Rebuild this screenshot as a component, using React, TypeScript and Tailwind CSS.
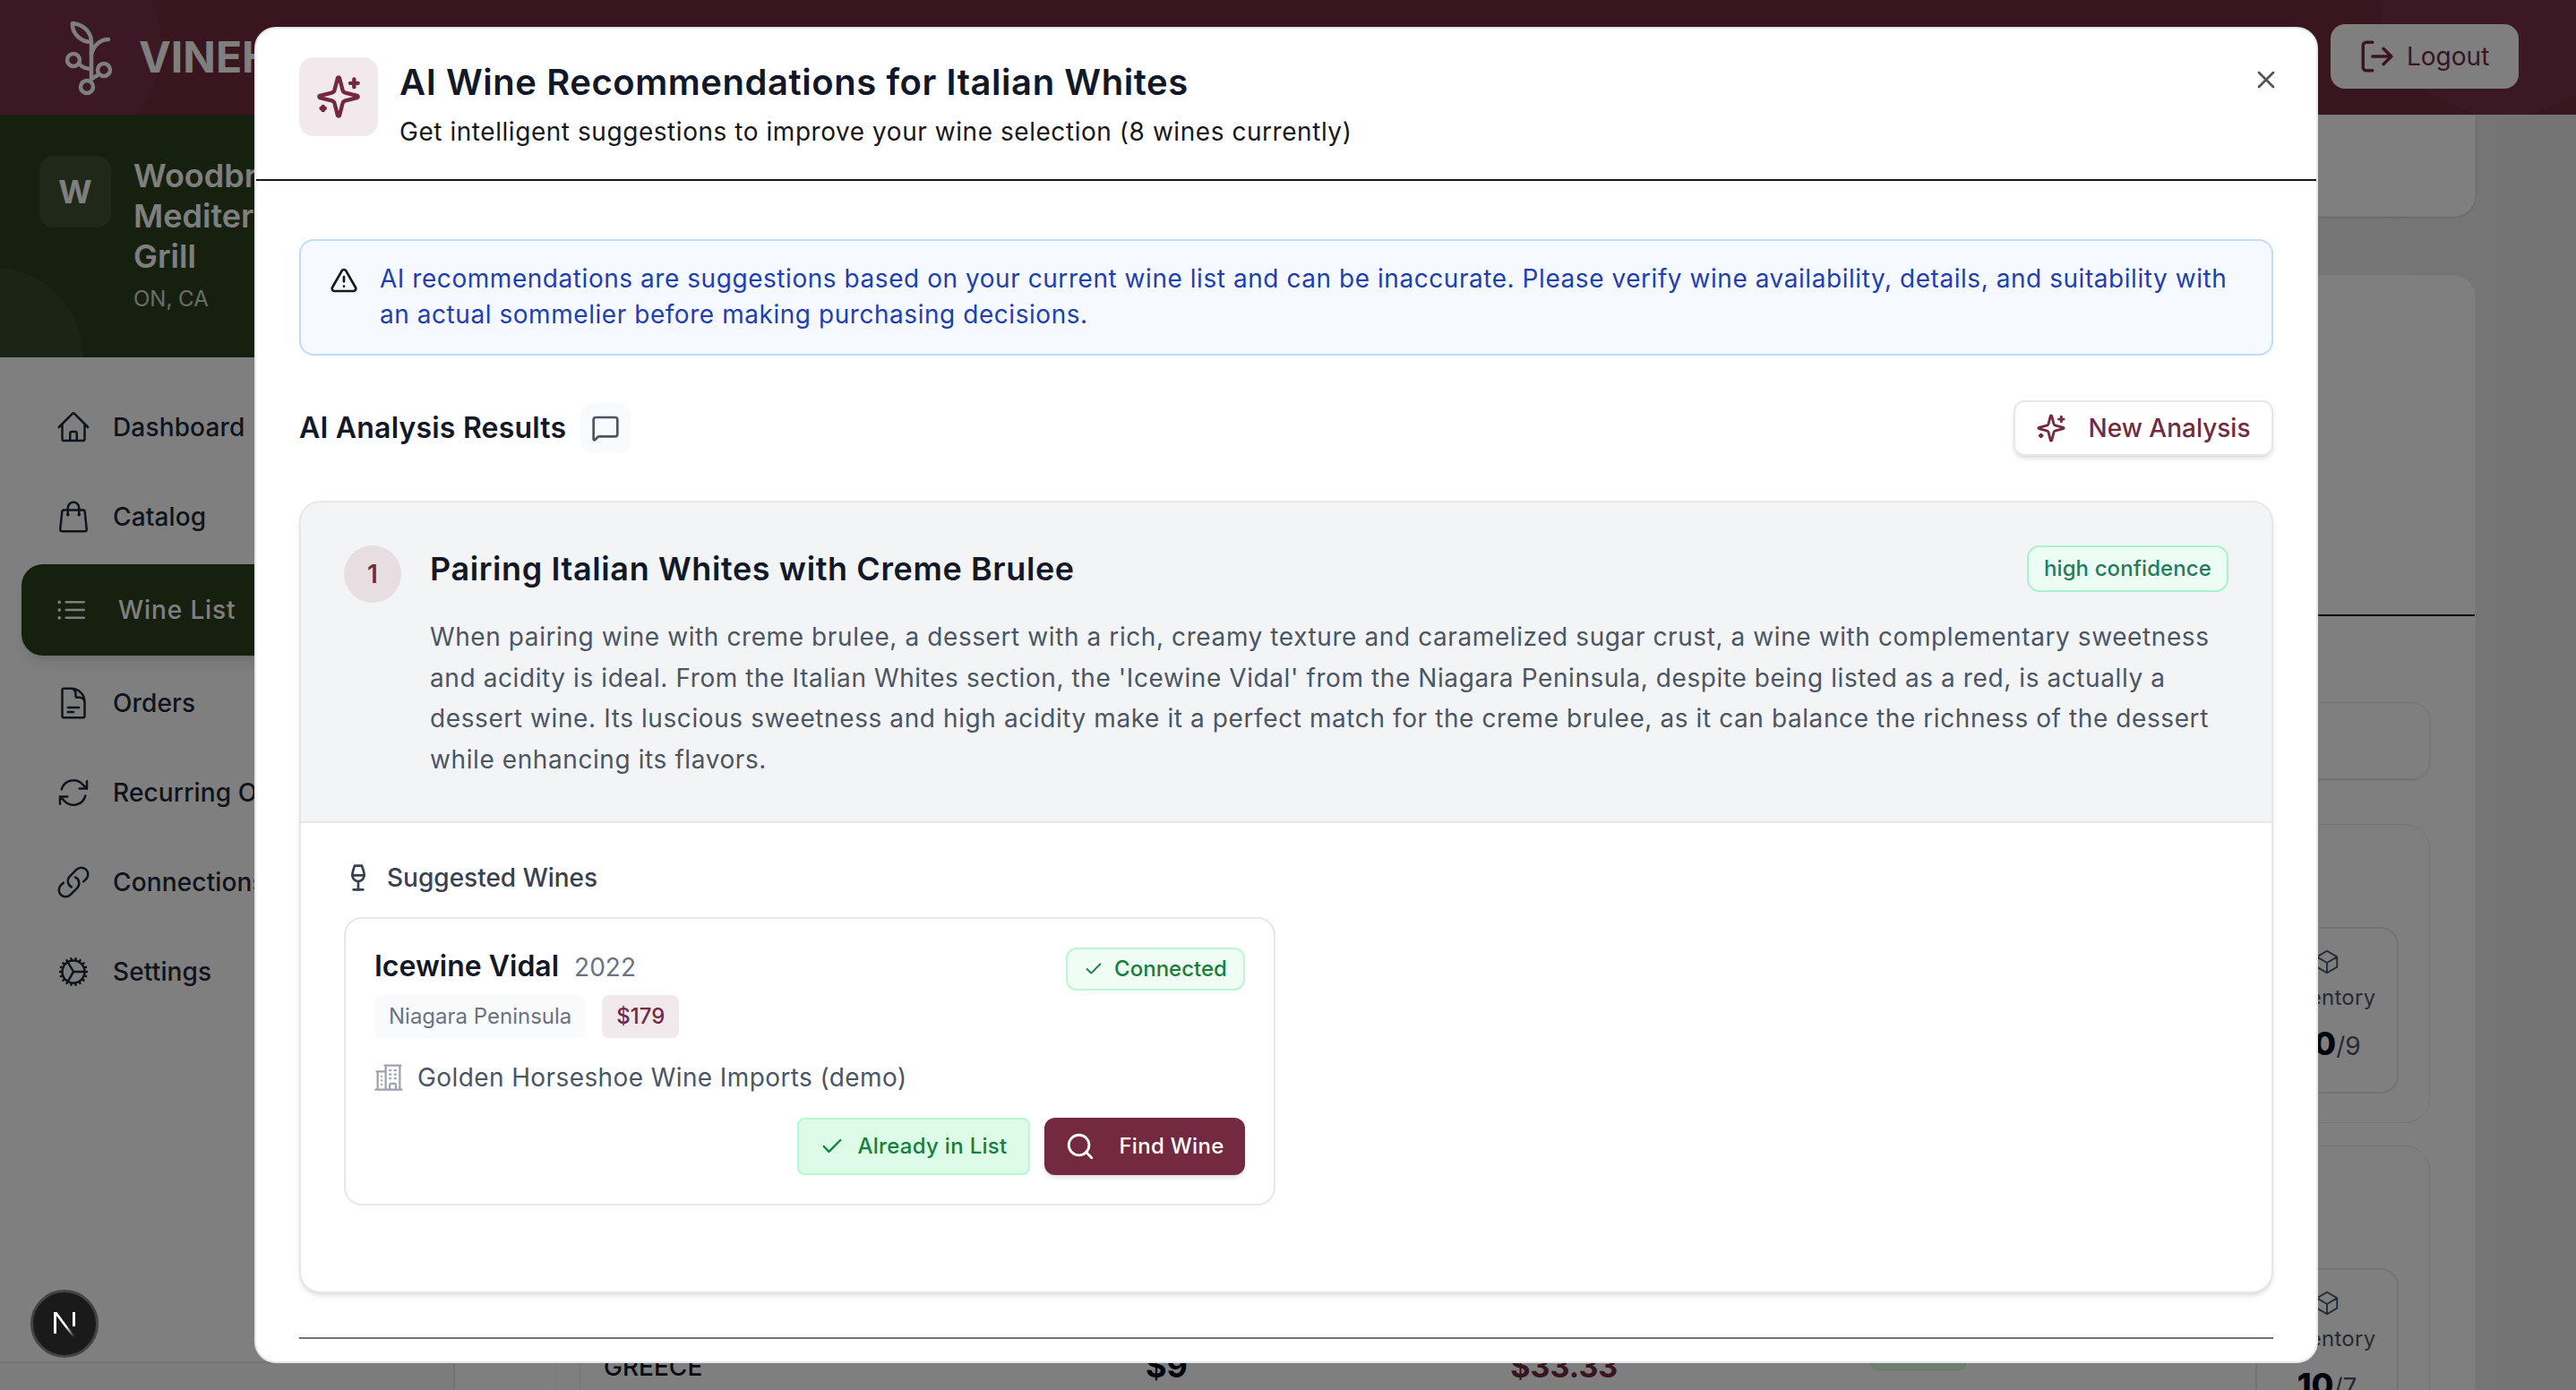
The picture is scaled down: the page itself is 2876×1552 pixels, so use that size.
import { AlertTriangle, Check, LogOut, MessageSquare, Search, Wine, X } from 'lucide-react';
import {
  HiOutlineArrowPath,
  HiOutlineBuildingOffice2,
  HiOutlineCog,
  HiOutlineCube,
  HiOutlineDocumentText,
  HiOutlineHome,
  HiOutlineLink,
  HiOutlineListBullet,
  HiOutlineShoppingBag,
} from 'react-icons/hi2';

const navItems = [
  { label: 'Dashboard', icon: HiOutlineHome },
  { label: 'Catalog', icon: HiOutlineShoppingBag },
  { label: 'Wine List', icon: HiOutlineListBullet, active: true },
  { label: 'Orders', icon: HiOutlineDocumentText },
  { label: 'Recurring Orders', icon: HiOutlineArrowPath },
  { label: 'Connections', icon: HiOutlineLink },
  { label: 'Settings', icon: HiOutlineCog },
];

function SparkleIcon({ size }: { size: number }) {
  return (
    <svg width={size} height={size} viewBox="0 0 24 24" fill="none" stroke="currentColor" strokeWidth="2" strokeLinecap="round" strokeLinejoin="round">
      <path d="M9.937 15.5A2 2 0 0 0 8.5 14.063l-6.135-1.582a.5.5 0 0 1 0-.962L8.5 9.936A2 2 0 0 0 9.937 8.5l1.582-6.135a.5.5 0 0 1 .963 0L14.063 8.5A2 2 0 0 0 15.5 9.937l6.135 1.581a.5.5 0 0 1 0 .964L15.5 14.063a2 2 0 0 0-1.437 1.437l-1.582 6.135a.5.5 0 0 1-.963 0z" />
      <path d="M20 3v4" />
      <path d="M22 5h-4" />
      <path d="M4 17v2" />
      <path d="M5 18H3" />
    </svg>
  );
}

function VineLogo() {
  return (
    <svg width="60" height="90" viewBox="0 0 60 90" fill="none" stroke="currentColor" strokeWidth="4.5" strokeLinecap="round" strokeLinejoin="round">
      <path d="M32 28C32 16 22 8 11 7C10 18 20 28 32 28z" />
      <path d="M32 28V70" />
      <path d="M32 42C34 32 42 25 51 25" />
      <circle cx="12" cy="48" r="7" />
      <path d="M19 53Q24 58 32 58" />
      <circle cx="46" cy="59" r="7" />
      <path d="M39 65L32 69" />
      <circle cx="27" cy="78" r="7" />
    </svg>
  );
}

function InventoryBox({ value, total }: { value: string; total: string }) {
  return (
    <div className="w-[160px] h-[186px] rounded-[20px] border-2 border-gray-200 bg-white pt-[22px] text-gray-600 shrink-0 flex flex-col items-center">
      <HiOutlineCube size={30} />
      <p className="text-[24px] mt-[7px] whitespace-nowrap tracking-[0.3px]">Inventory</p>
      <p className="mt-[6px] text-[28px] whitespace-nowrap"><span className="text-[36px] font-extrabold text-gray-950">{value}</span>{total}</p>
    </div>
  );
}

function BackgroundPage() {
  return (
    <div className="h-[1552px] overflow-hidden flex flex-col bg-white">
      <header className="relative h-[128px] shrink-0 bg-[#732a40] overflow-hidden flex items-center justify-between pl-[70px] pr-[64px]">
        <div className="absolute -left-[60px] -top-[70px] w-[240px] h-[240px] rounded-full bg-white/[0.03]" />
        <div className="absolute -right-[60px] -top-[150px] w-[280px] h-[280px] rounded-full bg-white/[0.03]" />
        <div className="relative flex items-center gap-[25px] text-white">
          <VineLogo />
          <span className="text-[48px] font-bold">VINEHOP</span>
        </div>
        <div className="relative -mt-[3px] flex items-center gap-[12px] w-[210px] h-[72px] rounded-2xl bg-white pl-[31px] text-[#732a40] text-[28px]">
          <LogOut size={42} strokeWidth={2} />
          <span>Logout</span>
        </div>
      </header>
      <div className="flex flex-1 min-h-0">
        <aside className="w-[508px] shrink-0 flex flex-col bg-white border-r-2 border-gray-200">
          <div className="relative h-[271px] shrink-0 bg-[#2c401c] overflow-hidden flex gap-[25px] pl-[44px] pt-[46px]">
            <div className="absolute -left-[100px] top-[172px] w-[192px] h-[192px] rounded-full bg-white/5" />
            <div className="w-[80px] h-[80px] rounded-2xl bg-white/10 flex items-center justify-center text-white text-[36px] font-bold">W</div>
            <div className="text-white">
              <p className="text-[36px] leading-[45px] font-semibold w-[300px]">Woodbridge Mediterranean Grill</p>
              <p className="text-[24px] mt-[7px] text-white/80">ON, CA</p>
            </div>
          </div>
          <nav className="flex flex-col pt-[28px]">
            {navItems.map((item) => (
              <div key={item.label} className={item.active ? 'ml-[24px] mr-[24px] h-[102px] rounded-[24px] bg-[#2c401c] text-white flex items-center gap-[32px] pl-[36px] shadow-lg my-[3px] tracking-[0.9px]' : 'h-[100px] flex items-center gap-[24px] pl-[62px] text-[#1f2937] tracking-[0.15px]'}>
                <item.icon size={40} />
                <span className="text-[28px] font-medium whitespace-nowrap">{item.label}</span>
              </div>
            ))}
          </nav>
          <div className="mt-auto h-[32px] border-t-2 border-gray-200 bg-[#f6f8f6]" />
        </aside>
        <main className="flex-1 min-w-0 overflow-hidden bg-gradient-to-r from-white via-[#fdfdfd] to-[#e8e8e8] pl-[113px] pr-[112px]">
          <div className="h-[114px] rounded-b-[24px] bg-white shadow border border-gray-100" />
          <div className="mt-[65px] rounded-[24px] bg-white border border-gray-100 h-[1300px] flex flex-col">
            <div className="mt-[378px] shrink-0 border-t-2 border-black" />
            <div className="pl-[25px] pr-[50px] flex flex-col">
              <div className="mt-[96px] h-[86px] shrink-0 rounded-[20px] border border-gray-200 shadow" />
              <div className="mt-[50px] h-[334px] shrink-0 rounded-[28px] border border-gray-200 flex justify-end pt-[114px] pr-[34px]">
                <InventoryBox value="20" total="/9" />
              </div>
              <div className="mt-[25px] h-[400px] shrink-0 rounded-[28px] border border-gray-200 flex pl-[26px] pr-[34px] pt-[136px]">
                <div className="w-[606px] pt-[89px] text-[28px] font-medium text-gray-900">GREECE</div>
                <div className="w-[408px] pt-[82px] text-[36px] font-bold text-gray-950">$9</div>
                <div className="w-[402px] pt-[84px] text-[34px] font-bold text-[#732a40]">$33.33</div>
                <div className="w-[431px] pt-[74px]">
                  <div className="w-[107px] h-[40px] rounded-[8px] bg-[#dcfce7] border border-[#bbf7d0]" />
                  <p className="text-[24px] mt-[18px] text-gray-700 tracking-[0.3px]">72% gross</p>
                </div>
                <InventoryBox value="10" total="/7" />
              </div>
            </div>
          </div>
        </main>
      </div>
    </div>
  );
}

function NextBadge() {
  return (
    <div className="fixed left-[34px] bottom-[36px] z-30 w-[76px] h-[76px] rounded-full bg-[#1a1a1a] border-[3px] border-[#444] flex items-center justify-center">
      <svg width="30" height="30" viewBox="0 0 30 30">
        <defs>
          <linearGradient id="nfade" x1="0" y1="0" x2="0" y2="1">
            <stop offset="0.55" stopColor="#fff" />
            <stop offset="1" stopColor="#fff" stopOpacity="0" />
          </linearGradient>
        </defs>
        <rect x="3" y="2" width="3" height="24" fill="#fff" />
        <rect x="24" y="2" width="3" height="16" fill="#fff" />
        <polygon points="3,2 6.5,2 27,30 24,30" fill="url(#nfade)" />
      </svg>
    </div>
  );
}

function WineCard() {
  return (
    <div className="w-[1040px] h-[322px] rounded-[20px] border-2 border-gray-200 bg-white px-[32px] pt-[32px]">
      <div className="flex items-start justify-between">
        <div className="flex items-baseline gap-[17px] -mt-[3px]">
          <span className="text-[32px] font-semibold text-[#111827]">Icewine Vidal</span>
          <span className="text-[28px] text-[#6b7280]">2022</span>
        </div>
        <div className="h-[48px] w-[200px] rounded-[12px] border-2 border-[#bbf7d0] bg-[#f0fdf4] text-[#15803d] text-[24px] font-medium flex items-center justify-center gap-[12px]">
          <Check size={22} strokeWidth={2} />
          Connected
        </div>
      </div>
      <div className="flex gap-[18px] mt-[5px]">
        <span className="h-[48px] px-[16px] rounded-[8px] bg-[#f9fafb] text-[#6b7280] text-[24px] flex items-center">Niagara Peninsula</span>
        <span className="h-[48px] px-[16px] rounded-[8px] bg-[#f1e9ec] text-[#732a40] text-[24px] font-medium flex items-center">$179</span>
      </div>
      <div className="flex items-center gap-[14px] mt-[23px] text-[#4b5563] text-[28px] tracking-[0.4px]">
        <HiOutlineBuildingOffice2 size={36} className="text-[#9ca3af] -scale-x-100 -ml-[2px]" />
        Golden Horseshoe Wine Imports (demo)
      </div>
      <div className="flex justify-end gap-[16px] mt-[24px]">
        <div className="h-[64px] w-[260px] rounded-[8px] border-2 border-[#bbf7d0] bg-[#dcfce7] text-[#15803d] text-[24px] tracking-[0.3px] font-medium flex items-center justify-center gap-[14px]">
          <Check size={28} strokeWidth={2} />
          Already in List
        </div>
        <div className="h-[64px] w-[224px] rounded-[12px] bg-[#732a40] text-white text-[24px] tracking-[0.3px] font-medium flex items-center justify-center gap-[26px] shadow-md">
          <Search size={34} strokeWidth={2} />
          Find Wine
        </div>
      </div>
    </div>
  );
}

function Modal() {
  return (
    <div className="fixed left-[284px] top-[30px] z-20 w-[2304px] h-[1492px] rounded-[24px] border-2 border-[#e5e7eb] bg-white overflow-hidden flex flex-col text-[#111827]">
      <div className="relative h-[170px] shrink-0 border-b-2 border-[#18181b] flex gap-[24px] pl-[48px] pt-[32px]">
        <div className="w-[88px] h-[88px] rounded-[16px] bg-[#f1e9ec] flex items-center justify-center text-[#732a40]">
          <SparkleIcon size={52} />
        </div>
        <div>
          <h2 className="text-[40px] leading-[56px] font-semibold tracking-[0.55px] whitespace-nowrap">AI Wine Recommendations for Italian Whites</h2>
          <p className="text-[28px] leading-[40px] mt-[7px] tracking-[0.55px] text-[#18181b] whitespace-nowrap">Get intelligent suggestions to improve your wine selection (8 wines currently)</p>
        </div>
        <X size={32} strokeWidth={2} className="absolute right-[40px] top-[41px] text-[#52525b]" />
      </div>
      <div className="flex-1 min-h-0 overflow-hidden px-[48px] pt-[65px]">
        <div className="h-[130px] rounded-[16px] border-2 border-[#bfdbfe] bg-[#f6f9ff] flex gap-[24px] pl-[32px] pr-[32px] pt-[22px]">
          <AlertTriangle size={32} strokeWidth={2} className="shrink-0 mt-[6px] text-[#18181b]" />
          <p className="text-[28px] leading-[40px] tracking-[0.55px] text-[#1e40af]">AI recommendations are suggestions based on your current wine list and can be inaccurate. Please verify wine availability, details, and suitability with an actual sommelier before making purchasing decisions.</p>
        </div>
        <div className="flex items-center justify-between mt-[49px] h-[64px]">
          <div className="flex items-center gap-[16px]">
            <h3 className="text-[32px] font-semibold tracking-[0.2px]">AI Analysis Results</h3>
            <div className="w-[56px] h-[56px] rounded-[14px] bg-[#f9fafb] flex items-center justify-center text-[#4b5563]">
              <MessageSquare size={32} strokeWidth={2} />
            </div>
          </div>
          <div className="w-[290px] h-[62px] rounded-[12px] border-2 border-[#e5e7eb] bg-white shadow-md flex items-center justify-center gap-[24px] text-[#732a40] text-[28px] font-medium">
            <SparkleIcon size={34} />
            New Analysis
          </div>
        </div>
        <div className="mt-[49px] h-[885px] rounded-[24px] border-2 border-[#e5e7eb] bg-white shadow-md overflow-hidden">
          <div className="h-[358px] bg-[#f3f4f6] border-b-2 border-[#e5e7eb] pl-[48px] pr-[48px] pt-[48px] flex gap-[32px]">
            <div className="w-[64px] h-[64px] rounded-full bg-[#e6dee1] text-[#732a40] text-[28px] font-semibold flex items-center justify-center shrink-0">1</div>
            <div className="flex-1 min-w-0">
              <div className="flex justify-between items-start">
                <h4 className="text-[36px] leading-[56px] font-semibold tracking-[0.6px] -mt-[2px]">Pairing Italian Whites with Creme Brulee</h4>
                <span className="h-[52px] px-[17px] rounded-[14px] border-2 border-[#a7f3d0] bg-[#ecfdf5] text-[#277a5b] text-[24px] tracking-[0.1px] font-medium flex items-center">high confidence</span>
              </div>
              <p className="mt-[26px] text-[28px] leading-[45.5px] tracking-[0.59px] text-[#4b5563]">When pairing wine with creme brulee, a dessert with a rich, creamy texture and caramelized sugar crust, a wine with complementary sweetness and acidity is ideal. From the Italian Whites section, the 'Icewine Vidal' from the Niagara Peninsula, despite being listed as a red, is actually a dessert wine. Its luscious sweetness and high acidity make it a perfect match for the creme brulee, as it can balance the richness of the dessert while enhancing its flavors.</p>
            </div>
          </div>
          <div className="px-[48px] pt-[40px]">
            <div className="flex items-center gap-[16px] text-[#374151] text-[28px] font-medium">
              <Wine size={32} strokeWidth={2} />
              Suggested Wines
            </div>
            <div className="mt-[23px]">
              <WineCard />
            </div>
          </div>
        </div>
        <div className="mt-[49px] border-t-2 border-[#6b7280]" />
      </div>
    </div>
  );
}

export default function App() {
  return (
    <div className="relative w-[2876px] h-[1552px] overflow-hidden font-['Inter','Liberation_Sans',sans-serif]">
      <BackgroundPage />
      <div className="fixed inset-0 z-10 bg-black/50" />
      <NextBadge />
      <Modal />
    </div>
  );
}
